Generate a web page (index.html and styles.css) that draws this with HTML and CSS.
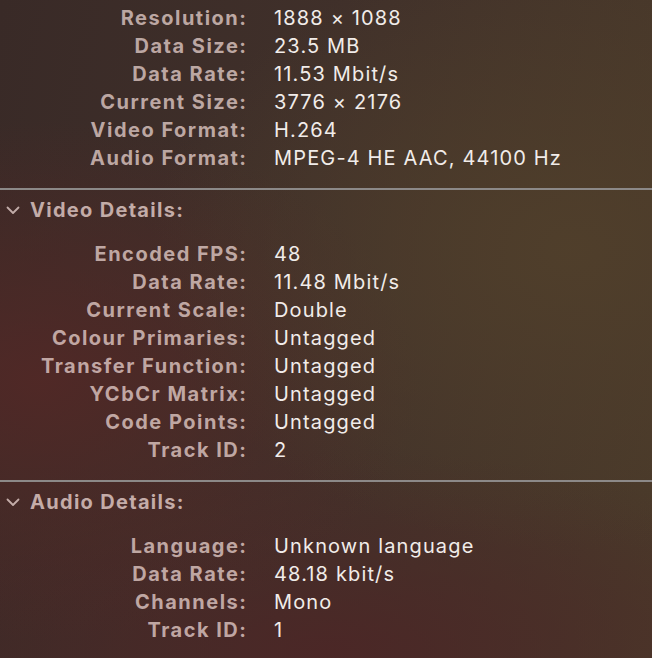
FILE: index.html
```html
<!DOCTYPE html>
<html lang="en">
<head>
<meta charset="utf-8">
<title>Movie Inspector</title>
<link rel="stylesheet" href="styles.css">
</head>
<body>
<div class="panel">
  <div class="rows">
    <div class="label">Resolution:</div><div class="value">1888 × 1088</div>
    <div class="label">Data Size:</div><div class="value">23.5 MB</div>
    <div class="label">Data Rate:</div><div class="value">11.53 Mbit/s</div>
    <div class="label">Current Size:</div><div class="value">3776 × 2176</div>
    <div class="label">Video Format:</div><div class="value">H.264</div>
    <div class="label">Audio Format:</div><div class="value">MPEG-4 HE AAC, 44100 Hz</div>
  </div>
  <div class="divider"></div>
  <div class="section-head">
    <svg class="chevron" viewBox="0 0 14 9" width="14" height="9"><path d="M1.5 1.5 L7 7 L12.5 1.5" fill="none" stroke="currentColor" stroke-width="1.8" stroke-linecap="round" stroke-linejoin="round"/></svg>
    <span>Video Details:</span>
  </div>
  <div class="rows">
    <div class="label">Encoded FPS:</div><div class="value">48</div>
    <div class="label">Data Rate:</div><div class="value">11.48 Mbit/s</div>
    <div class="label">Current Scale:</div><div class="value">Double</div>
    <div class="label">Colour Primaries:</div><div class="value">Untagged</div>
    <div class="label">Transfer Function:</div><div class="value">Untagged</div>
    <div class="label">YCbCr Matrix:</div><div class="value">Untagged</div>
    <div class="label">Code Points:</div><div class="value">Untagged</div>
    <div class="label">Track ID:</div><div class="value">2</div>
  </div>
  <div class="divider"></div>
  <div class="section-head">
    <svg class="chevron" viewBox="0 0 14 9" width="14" height="9"><path d="M1.5 1.5 L7 7 L12.5 1.5" fill="none" stroke="currentColor" stroke-width="1.8" stroke-linecap="round" stroke-linejoin="round"/></svg>
    <span>Audio Details:</span>
  </div>
  <div class="rows">
    <div class="label">Language:</div><div class="value">Unknown language</div>
    <div class="label">Data Rate:</div><div class="value">48.18 kbit/s</div>
    <div class="label">Channels:</div><div class="value">Mono</div>
    <div class="label">Track ID:</div><div class="value">1</div>
  </div>
</div>
</body>
</html>
```
FILE: styles.css
```css
html, body {
  margin: 0;
  padding: 0;
  height: 100%;
}
body {
  font-family: Inter, "Liberation Sans", sans-serif;
  font-size: 20px;
  background:
    radial-gradient(ellipse 420px 300px at 570px 250px, rgba(80,63,43,0.95), rgba(80,63,43,0) 100%),
    radial-gradient(ellipse 380px 260px at 40px 380px, rgba(82,40,38,0.9), rgba(82,40,38,0) 100%),
    radial-gradient(ellipse 520px 200px at 330px 650px, rgba(76,38,38,0.9), rgba(76,38,38,0) 100%),
    linear-gradient(100deg, #392a27 0%, #40302a 45%, #4a3a2a 100%);
  overflow: hidden;
}
.panel {
  width: 652px;
  height: 658px;
  padding-top: 4px;
  box-sizing: border-box;
}
.rows {
  display: grid;
  grid-template-columns: 246px 1fr;
  column-gap: 28px;
  grid-auto-rows: 28px;
  align-items: center;
}
.label {
  text-align: right;
  font-weight: 700;
  letter-spacing: 1.5px;
  margin-right: -1.5px;
  color: rgba(238, 216, 212, 0.72);
  white-space: nowrap;
}
.value {
  font-weight: 400;
  letter-spacing: 1.15px;
  color: #f1ece9;
  white-space: nowrap;
}
.divider {
  height: 2px;
  background: #8c8988;
  margin: 16px 0 6px;
}
.section-head {
  height: 28px;
  display: flex;
  align-items: center;
  padding-left: 6px;
  gap: 10px;
  font-weight: 700;
  letter-spacing: 1.3px;
  color: rgba(238, 216, 212, 0.75);
  margin-bottom: 16px;
}
.chevron {
  display: block;
  margin-top: 1px;
}
```
